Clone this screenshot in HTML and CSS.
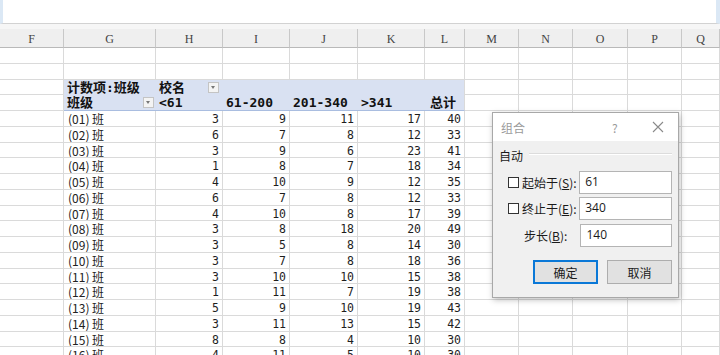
FILE: index.html
```html
<!DOCTYPE html>
<html lang="zh">
<head>
<meta charset="utf-8">
<title>数据透视表 - 组合</title>
<link rel="stylesheet" href="styles.css">
</head>
<body>
<div class="sheet">
  <div class="formula"></div>
  <div class="gap"></div>

  <div class="row colhead">
    <div>F</div><div>G</div><div>H</div><div>I</div><div>J</div><div>K</div>
    <div>L</div><div>M</div><div>N</div><div>O</div><div>P</div><div>Q</div>
  </div>

  <div class="row"><div></div><div></div><div></div><div></div><div></div><div></div><div></div><div></div><div></div><div></div><div></div><div></div></div>
  <div class="row"><div></div><div></div><div></div><div></div><div></div><div></div><div></div><div></div><div></div><div></div><div></div><div></div></div>

  <div class="row pvrow">
    <div></div>
    <div class="pv b">计数项:班级</div>
    <div class="pv b">校名<span class="drop"></span></div>
    <div class="pv"></div><div class="pv"></div><div class="pv"></div><div class="pv last"></div>
    <div></div><div></div><div></div><div></div><div></div>
  </div>
  <div class="row pvrow pvhead">
    <div></div>
    <div class="pv b">班级<span class="drop drop-g"></span></div>
    <div class="pv b">&lt;61</div>
    <div class="pv b">61-200</div>
    <div class="pv b">201-340</div>
    <div class="pv b">&gt;341</div>
    <div class="pv b last tot">总计</div>
    <div></div><div></div><div></div><div></div><div></div>
  </div>

  <div class="row data"><div></div><div>(01) 班</div><div>3</div><div>9</div><div>11</div><div>17</div><div>40</div><div></div><div></div><div></div><div></div><div></div></div>
  <div class="row data"><div></div><div>(02) 班</div><div>6</div><div>7</div><div>8</div><div>12</div><div>33</div><div></div><div></div><div></div><div></div><div></div></div>
  <div class="row data"><div></div><div>(03) 班</div><div>3</div><div>9</div><div>6</div><div>23</div><div>41</div><div></div><div></div><div></div><div></div><div></div></div>
  <div class="row data"><div></div><div>(04) 班</div><div>1</div><div>8</div><div>7</div><div>18</div><div>34</div><div></div><div></div><div></div><div></div><div></div></div>
  <div class="row data"><div></div><div>(05) 班</div><div>4</div><div>10</div><div>9</div><div>12</div><div>35</div><div></div><div></div><div></div><div></div><div></div></div>
  <div class="row data"><div></div><div>(06) 班</div><div>6</div><div>7</div><div>8</div><div>12</div><div>33</div><div></div><div></div><div></div><div></div><div></div></div>
  <div class="row data"><div></div><div>(07) 班</div><div>4</div><div>10</div><div>8</div><div>17</div><div>39</div><div></div><div></div><div></div><div></div><div></div></div>
  <div class="row data"><div></div><div>(08) 班</div><div>3</div><div>8</div><div>18</div><div>20</div><div>49</div><div></div><div></div><div></div><div></div><div></div></div>
  <div class="row data"><div></div><div>(09) 班</div><div>3</div><div>5</div><div>8</div><div>14</div><div>30</div><div></div><div></div><div></div><div></div><div></div></div>
  <div class="row data"><div></div><div>(10) 班</div><div>3</div><div>7</div><div>8</div><div>18</div><div>36</div><div></div><div></div><div></div><div></div><div></div></div>
  <div class="row data"><div></div><div>(11) 班</div><div>3</div><div>10</div><div>10</div><div>15</div><div>38</div><div></div><div></div><div></div><div></div><div></div></div>
  <div class="row data"><div></div><div>(12) 班</div><div>1</div><div>11</div><div>7</div><div>19</div><div>38</div><div></div><div></div><div></div><div></div><div></div></div>
  <div class="row data"><div></div><div>(13) 班</div><div>5</div><div>9</div><div>10</div><div>19</div><div>43</div><div></div><div></div><div></div><div></div><div></div></div>
  <div class="row data"><div></div><div>(14) 班</div><div>3</div><div>11</div><div>13</div><div>15</div><div>42</div><div></div><div></div><div></div><div></div><div></div></div>
  <div class="row data"><div></div><div>(15) 班</div><div>8</div><div>8</div><div>4</div><div>10</div><div>30</div><div></div><div></div><div></div><div></div><div></div></div>
  <div class="row data"><div></div><div>(16) 班</div><div>4</div><div>11</div><div>5</div><div>10</div><div>30</div><div></div><div></div><div></div><div></div><div></div></div>
</div>

<div class="dialog">
  <div class="dlg-title">
    <span class="dlg-name">组合</span>
    <span class="dlg-help">?</span>
    <span class="dlg-close">
      <svg width="12" height="12" viewBox="0 0 12 12"><path d="M1 1 L11 11 M11 1 L1 11" stroke="#8a8a8a" stroke-width="1.1" fill="none"/></svg>
    </span>
  </div>
  <div class="dlg-body">
    <div class="group">自动</div>
    <div class="field">
      <span class="chk"></span>
      <label class="lbl">起始于(<u>S</u>):</label>
      <span class="inp">61</span>
    </div>
    <div class="field">
      <span class="chk"></span>
      <label class="lbl">终止于(<u>E</u>):</label>
      <span class="inp">340</span>
    </div>
    <div class="field">
      <span class="nochk"></span>
      <label class="lbl">步长(<u>B</u>):</label>
      <span class="inp">140</span>
    </div>
    <div class="buttons">
      <button type="button" class="btn primary">确定</button>
      <button type="button" class="btn">取消</button>
    </div>
  </div>
</div>
</body>
</html>
```

FILE: styles.css
```css
html, body {
  margin: 0;
  padding: 0;
}
body {
  width: 720px;
  height: 355px;
  overflow: hidden;
  background: #fff;
  font-family: "DejaVu Sans Mono", "Noto Sans CJK SC", monospace;
  color: #1e1e1e;
}
.sheet {
  width: 720px;
}
.formula {
  height: 24px;
  background: #fff;
  border-left: 3px solid #dbe8f5;
  border-right: 4px solid #dbe8f5;
  border-bottom: 1px solid #d2d2d2;
  box-sizing: border-box;
}
.gap {
  height: 5px;
  background: #f6f6f6;
}
.row {
  display: grid;
  grid-template-columns: 64px 92px 67px 67px 68px 67px 40px 54px 54px 55px 54px 38px;
  height: 15.75px;
}
.row > div {
  box-sizing: border-box;
  border-right: 1px solid #dadada;
  border-bottom: 1px solid #dadada;
  white-space: nowrap;
  overflow: hidden;
  position: relative;
}
.colhead {
  height: 19px;
  background: #efefef;
}
.colhead > div {
  border-right-color: #c8c8c8;
  border-bottom-color: #b9b9b9;
  font-family: "Liberation Serif", serif;
  font-size: 12px;
  color: #444;
  text-align: center;
  line-height: 19px;
  padding-top: 1px;
}
.pvrow > .pv {
  background: #d9e1f2;
  border-right: none;
  border-bottom: none;
}
.pvrow > .pv.last {
  border-right: 1px solid #dadada;
}
.pvhead > .pv {
  border-bottom: 1px solid #a9bde0;
}
.pv.b {
  font-family: "DejaVu Sans Mono", "Noto Sans CJK SC", monospace;
  font-weight: bold;
  font-size: 13px;
  line-height: 16px;
  padding-left: 3px;
  color: #111;
}
.pv.tot {
  padding-left: 5px;
}
.drop {
  position: absolute;
  left: 52px;
  top: 2px;
  width: 9px;
  height: 9px;
  border: 1px solid #c4c4c4;
  background: #f4f4f4;
}
.drop::after {
  content: "";
  position: absolute;
  left: 2px;
  top: 3px;
  border-left: 2.5px solid transparent;
  border-right: 2.5px solid transparent;
  border-top: 3px solid #777;
}
.drop.drop-g {
  left: 79px;
}
.data > div {
  font-size: 11.5px;
  line-height: 16px;
  text-align: right;
  padding-right: 3px;
}
.data > div:nth-child(2) {
  text-align: left;
  padding-left: 4px;
  font-size: 12px;
  font-family: "Noto Sans CJK SC", sans-serif;
  color: #222;
}

/* 组合 dialog */
.dialog {
  position: absolute;
  left: 492px;
  top: 112px;
  width: 187px;
  height: 186px;
  box-sizing: border-box;
  border: 1px solid #a8a8a8;
  background: #f0f0f0;
  box-shadow: 1px 2px 6px rgba(0, 0, 0, 0.25);
  font-family: "Noto Sans CJK SC", sans-serif;
  font-size: 12px;
  color: #1a1a1a;
}
.dlg-title {
  height: 28px;
  background: #fff;
  display: flex;
  align-items: center;
  padding-left: 8px;
}
.dlg-name {
  color: #9a9a9a;
  flex: 1;
}
.dlg-help {
  color: #9a9a9a;
  font-size: 12px;
  width: 40px;
}
.dlg-close {
  width: 26px;
  display: flex;
  align-items: center;
}
.dlg-body {
  padding: 6px 6px 0 6px;
}
.group {
  display: flex;
  align-items: center;
  gap: 6px;
  height: 16px;
  margin-bottom: 8px;
}
.group::after {
  content: "";
  flex: 1;
  border-top: 1px solid #dcdcdc;
  border-bottom: 1px solid #fff;
  margin-top: -2px;
}
.field {
  display: flex;
  align-items: center;
  height: 22px;
  margin-bottom: 4.5px;
  padding-left: 9px;
}
.chk, .nochk {
  width: 11px;
  height: 11px;
  box-sizing: border-box;
  margin-right: 3px;
  flex: none;
}
.chk {
  border: 1px solid #333;
  background: #fff;
}
.nochk {
  margin-right: 5px;
}
.lbl {
  width: 58px;
  white-space: nowrap;
}
.inp {
  width: 94px;
  height: 23px;
  box-sizing: border-box;
  border: 1px solid #b4b4b4;
  background: #fff;
  padding-left: 5px;
  line-height: 20px;
  font-family: "Open Sans", sans-serif;
  font-size: 12px;
}
.buttons {
  display: flex;
  justify-content: flex-end;
  gap: 9px;
  margin-top: 14px;
}
.btn {
  width: 65px;
  height: 24px;
  box-sizing: border-box;
  border: 1px solid #adadad;
  background: #e1e1e1;
  font-family: "Noto Sans CJK SC", sans-serif;
  font-size: 12px;
  color: #1a1a1a;
  padding: 0;
}
.btn.primary {
  border: 2px solid #0a78d7;
}
```
